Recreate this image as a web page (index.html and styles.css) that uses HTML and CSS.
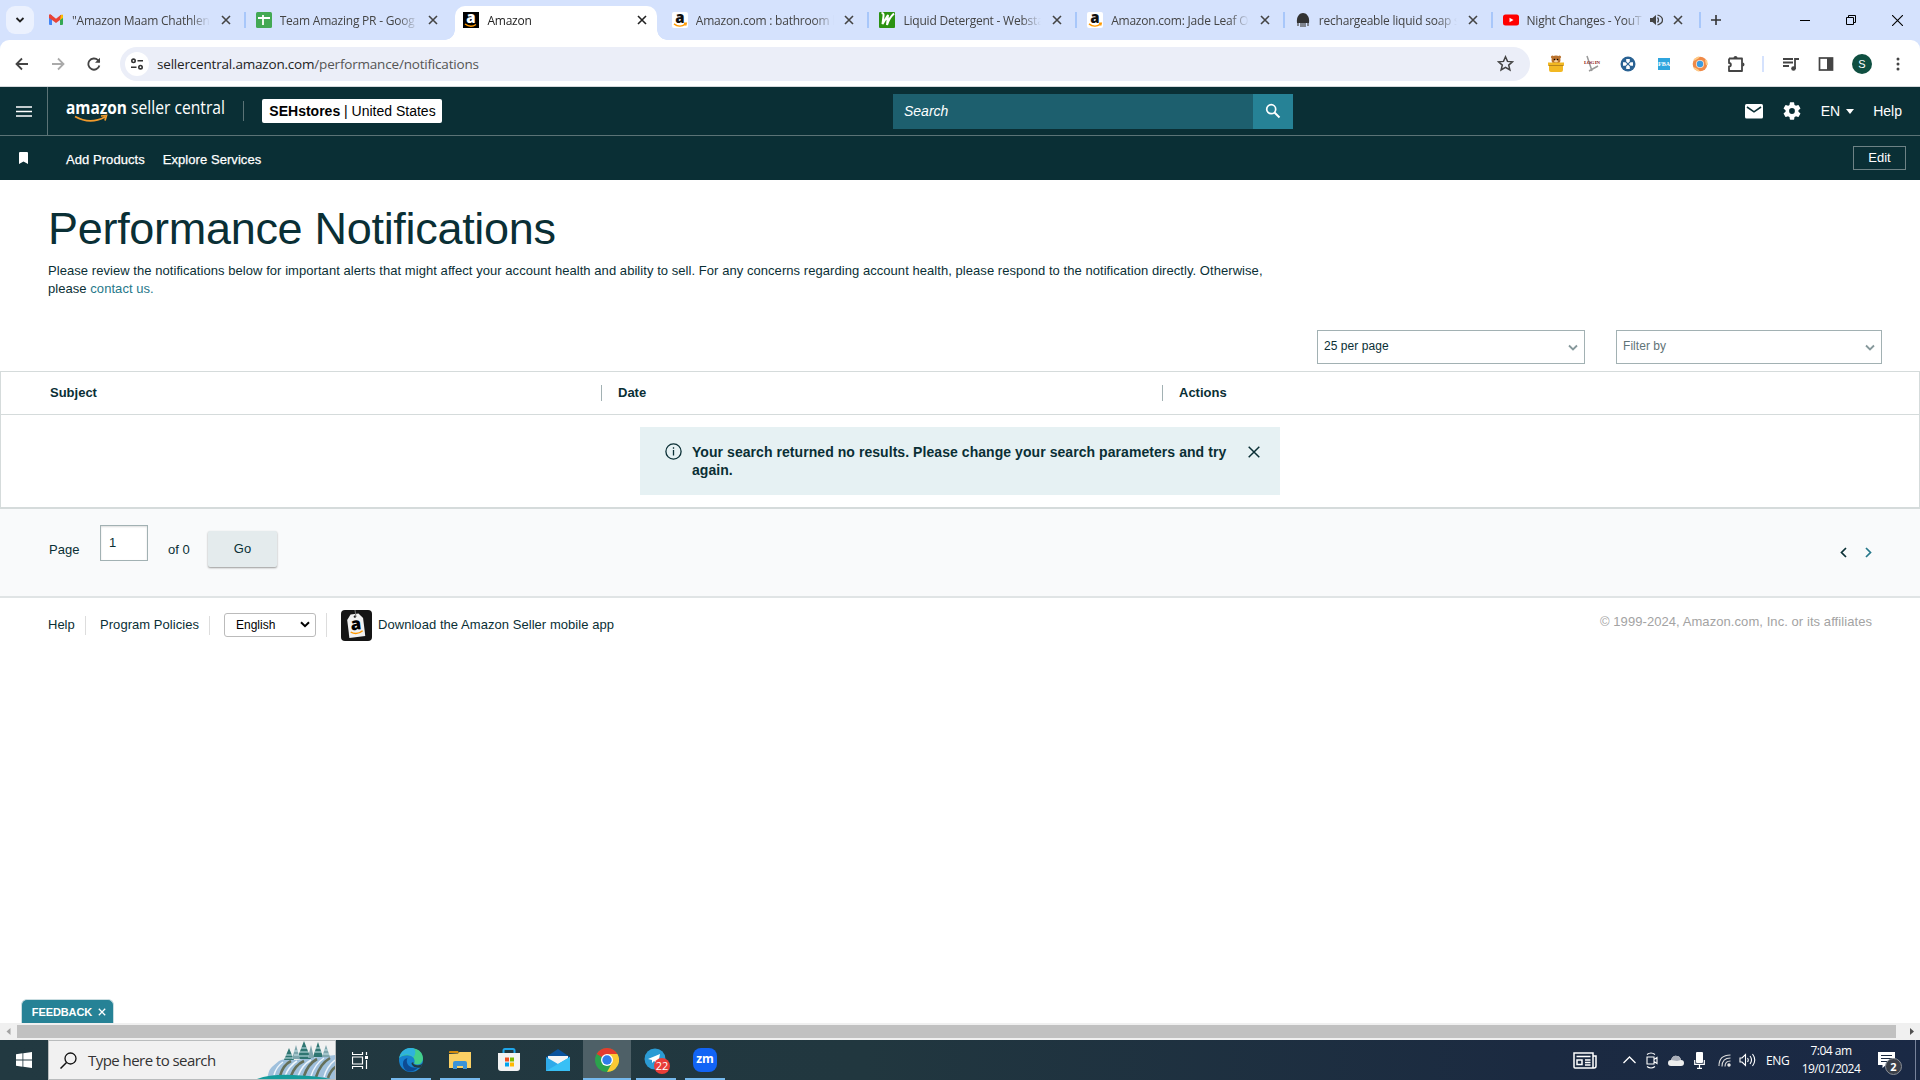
FILE: index.html
```html
<!DOCTYPE html>
<html lang="en">
  <head>
    <meta charset="UTF-8" />
    <meta name="viewport" content="width=device-width, initial-scale=1.0" />
    <title>Amazon</title>
    <link rel="stylesheet" href="styles.css">
  </head>
  <body>
    <!-- shared symbols -->
    <svg class="defs" aria-hidden="true">
      <symbol id="x" viewBox="0 0 10 10"><path d="M1 1l8 8M9 1L1 9" fill="none" stroke="currentColor" stroke-width="1.6" /></symbol>
      <symbol id="amz" viewBox="0 0 16 16">
        <rect width="16" height="16" rx="2" fill="#fff" />
        <text x="8" y="11" font-family="Open Sans" font-weight="800" font-size="15" text-anchor="middle" fill="#111">a</text>
        <path d="M2 11.8c3.500 2.800 8 2.800 11 .600M12 11.200l2.200.100-.600 2.200" fill="none" stroke="#f90" stroke-width="1.500" />
      </symbol>
    </svg>

    <div class="tabs">
      <div class="tab-search"><svg width="10" height="10" viewBox="0 0 10 10"><path d="M1.500 3L5 6.500 8.500 3" fill="none" stroke="#222" stroke-width="1.800" /></svg></div>
      <div class="tab">
        <svg class="fav" viewBox="0 0 16 16"><path d="M1 3h3v10H2a1 1 0 01-1-1z" fill="#4285f4" /><path d="M12 3h3v9a1 1 0 01-1 1h-2z" fill="#34a853" /><path d="M12 3.500l2-1a1 1 0 011 1V6l-3 2z" fill="#fbbc04" /><path d="M1 3.500C1 2.500 2.200 2 3 2.700l5 4 5-4L12 8l-4 3-4-3-3-2z" fill="#ea4335" /></svg>
        <span class="title">"Amazon Maam Chathlen</span>
        <svg class="x"><use href="#x" /></svg>
      </div>
      <div class="tab sep">
        <svg class="fav" viewBox="0 0 16 16"><rect width="16" height="16" rx="1.500" fill="#43a954" /><path d="M2 6h12M7 3v10" stroke="#fff" stroke-width="1.800" /></svg>
        <span class="title">Team Amazing PR - Goog</span>
        <svg class="x"><use href="#x" /></svg>
      </div>
      <div class="tab active">
        <svg class="fav" viewBox="0 0 16 16"><rect width="16" height="16" fill="#000" /><text x="8" y="11" font-family="Open Sans" font-weight="800" font-size="15" text-anchor="middle" fill="#fff">a</text><path d="M2 12c3.500 2.600 8 2.600 11 .500" fill="none" stroke="#f90" stroke-width="1.400" /></svg>
        <span class="title">Amazon</span>
        <svg class="x"><use href="#x" /></svg>
      </div>
      <div class="tab">
        <svg class="fav"><use href="#amz" /></svg>
        <span class="title">Amazon.com : bathroom h</span>
        <svg class="x"><use href="#x" /></svg>
      </div>
      <div class="tab sep">
        <svg class="fav" viewBox="0 0 16 16"><rect width="16" height="16" rx="1" fill="#2b9212" /><path d="M2.500 1q2.500 0 2 3l-1 8L9 3 8 13Q10 6 15 1.500" fill="none" stroke="#fff" stroke-width="2" /></svg>
        <span class="title">Liquid Detergent - Websta</span>
        <svg class="x"><use href="#x" /></svg>
      </div>
      <div class="tab sep">
        <svg class="fav"><use href="#amz" /></svg>
        <span class="title">Amazon.com: Jade Leaf O</span>
        <svg class="x"><use href="#x" /></svg>
      </div>
      <div class="tab sep">
        <svg class="fav" viewBox="0 0 16 16"><path d="M2 11C1 4 5 1 8 1s7 3 6 10z" fill="#333" /><path d="M3 11v3M6 11v4M8 11v4M10 11v4M13 11v3" stroke="#555" stroke-width="1.300" /></svg>
        <span class="title">rechargeable liquid soap s</span>
        <svg class="x"><use href="#x" /></svg>
      </div>
      <div class="tab sep last">
        <svg class="fav" viewBox="0 0 16 16"><rect y="2.500" width="16" height="11" rx="2.500" fill="#f00" /><path d="M6.500 5.700v4.600L10.500 8z" fill="#fff" /></svg>
        <span class="title short">Night Changes - YouT</span>
        <svg class="audio" viewBox="0 0 14 14"><path d="M1 5v4h2.500L7 12V2L3.500 5z" fill="#444" /><path d="M8.500 4.500q2 2.500 0 5M8.500 2q5 1.500 5 5t-5 5" fill="none" stroke="#444" stroke-width="1.300" /></svg>
        <svg class="x"><use href="#x" /></svg>
      </div>
      <div class="newtab"><svg width="12" height="12" viewBox="0 0 12 12"><path d="M6 1v10M1 6h10" stroke="#333" stroke-width="1.600" /></svg></div>
      <div class="winbtns">
        <svg width="10" height="10" viewBox="0 0 10 10"><path d="M0 5.500h10" stroke="#000" /></svg>
        <svg width="10" height="10" viewBox="0 0 10 10"><path d="M.500 2.500h7v7h-7zM2.500 2.500v-2h7v7h-2" fill="none" stroke="#000" /></svg>
        <svg width="11" height="11" viewBox="0 0 10 10"><path d="M0 0l10 10M10 0L0 10" stroke="#000" /></svg>
      </div>
    </div>

    <div class="toolbar">
      <div class="nav">
        <svg width="14" height="14" viewBox="0 0 14 14"><path d="M13 7H2M7 1.500L1.500 7 7 12.500" fill="none" stroke="#444" stroke-width="1.800" /></svg>
        <svg width="14" height="14" viewBox="0 0 14 14"><path d="M1 7h11M7 1.500L12.500 7 7 12.500" fill="none" stroke="#aaa" stroke-width="1.800" /></svg>
        <svg width="14" height="14" viewBox="0 0 14 14"><path d="M12.400 8.500A5.600 5.600 0 1111 3.200L12.500 5" fill="none" stroke="#444" stroke-width="1.800" /><path d="M13 .800v5H8z" fill="#444" /></svg>
      </div>
      <div class="omnibox">
        <span class="site-info"><svg width="14" height="14" viewBox="0 0 14 14" fill="none" stroke="#333" stroke-width="1.600"><circle cx="3.500" cy="3.800" r="1.700" /><path d="M7.500 3.800H13M1 10.200h5.500" /><circle cx="10.500" cy="10.200" r="1.700" /></svg></span>
        <span class="url">sellercentral.amazon.com<i>/performance/notifications</i></span>
        <svg class="star" width="17" height="17" viewBox="0 0 17 17"><path d="M8.500 1.800l2 4.600 5 .400-3.800 3.300 1.200 4.900-4.400-2.600L4.100 15l1.200-4.900L1.500 6.800l5-.400z" fill="none" stroke="#444" stroke-width="1.500" /></svg>
      </div>
      <div class="exts">
        <svg width="18" height="18" viewBox="0 0 18 18"><circle cx="9" cy="5" r="4.500" fill="#b9722e" /><circle cx="5.500" cy="2" r="1.600" fill="#b9722e" /><circle cx="12.500" cy="2" r="1.600" fill="#b9722e" /><circle cx="7.400" cy="4.500" r=".700" /><circle cx="10.600" cy="4.500" r=".700" /><ellipse cx="9" cy="6.300" rx="1.800" ry="1.200" fill="#f3cf9c" /><path d="M1 7.500h16v3h-1V15q0 2-2 2H4q-2 0-2-2v-4.500H1z" fill="#f2b822" /><path d="M1.500 10.500h15" stroke="#b9851b" /></svg>
        <svg width="18" height="18" viewBox="0 0 18 18"><path d="M4 1l5 15M15 11l-9 5" stroke="#999" stroke-width="1.500" /><text x="1" y="9" font-family="Liberation Serif" font-weight="700" font-size="5" textLength="16" fill="#8d2020">LOG IN</text></svg>
        <svg width="18" height="18" viewBox="0 0 18 18"><circle cx="9" cy="9" r="7.500" fill="#2a6293" /><path d="M7.200 4h3.600v2.500L9 8.200 7.200 6.500zM7.200 14h3.600v-2.500L9 9.800l-1.800 1.700zM4 7.200v3.600h2.500L8.200 9 6.500 7.200zM14 7.200v3.600h-2.500L9.800 9l1.700-1.800z" fill="#fff" /></svg>
        <svg width="18" height="18" viewBox="0 0 18 18"><rect x="3" y="3" width="12" height="12" fill="#2fa5de" /><text x="9" y="10.500" font-family="Liberation Serif" font-weight="700" font-size="6" text-anchor="middle" fill="#fff">FBA</text></svg>
        <svg width="18" height="18" viewBox="0 0 18 18"><circle cx="9" cy="9" r="7.300" fill="#f08a47" /><path d="M3 5l5-3M15 5l1 5M3 13l5 3" stroke="#ffcb87" stroke-width="2" /><circle cx="9" cy="9" r="4" fill="#fbe3cf" /><circle cx="9" cy="9" r="3.200" fill="#3c9be0" /></svg>
        <svg width="18" height="18" viewBox="0 0 18 18"><path d="M2 3.500h13V8M15 11v5H2v-4.500c2.500 0 2.500-3.500 0-3.500V3.500M15 11V8" fill="none" stroke="#444" stroke-width="1.800" stroke-linejoin="round" /><path d="M6.500 3a2 2 0 014 0zM15.500 7.500a2 2 0 010 4z" fill="#444" /></svg>
      </div>
      <span class="bar"></span>
      <div class="chrome-actions">
        <svg width="18" height="18" viewBox="0 0 18 18"><path d="M1 4h10M1 7.500h10M1 11h6M13 14V4h4" fill="none" stroke="#444" stroke-width="1.800" /><circle cx="11.500" cy="13.500" r="2.300" fill="#444" /></svg>
        <svg width="18" height="18" viewBox="0 0 18 18"><rect x="2.500" y="3" width="13" height="12" fill="none" stroke="#444" stroke-width="1.700" /><path d="M10 3h5.500v12H10z" fill="#444" /></svg>
        <span class="avatar">S</span>
        <svg width="18" height="18" viewBox="0 0 18 18" fill="#444"><circle cx="9" cy="4" r="1.500" /><circle cx="9" cy="9" r="1.500" /><circle cx="9" cy="14" r="1.500" /></svg>
      </div>
    </div>

    <header class="header">
      <div class="burger"><svg width="16" height="12" viewBox="0 0 16 12"><path d="M0 2h16M0 6.500h16M0 11h16" stroke="#fff" stroke-width="1.700" /></svg></div>
      <svg class="logo" width="160" height="28" viewBox="0 0 160 28" fill="#fff" font-family="Open Sans">
        <text x="0" y="17" font-size="18" font-weight="700" textLength="61" lengthAdjust="spacingAndGlyphs">amazon</text>
        <text x="65" y="17" font-size="18.500" textLength="94" lengthAdjust="spacingAndGlyphs">seller central</text>
        <path d="M9 19.500q15 8.500 30 .500M35 19l5.500-.500-1.500 5" fill="none" stroke="#f19a2c" stroke-width="1.700" />
      </svg>
      <span class="divider"></span>
      <button class="store"><b>SEHstores</b> | United States</button>
      <div class="search">
        <span>Search</span>
        <button><svg width="16" height="16" viewBox="0 0 16 16"><circle cx="6.200" cy="6.200" r="4.500" fill="none" stroke="#fff" stroke-width="1.700" /><path d="M9.500 9.500l5 5" stroke="#fff" stroke-width="2" /></svg></button>
      </div>
      <div class="header-right">
        <svg width="18" height="15" viewBox="0 0 18 15"><rect width="18" height="14.500" rx="1.500" fill="#fff" /><path d="M2 3l7 4.800L16 3" fill="none" stroke="#0a2f35" stroke-width="1.600" /></svg>
        <svg class="gear" width="18" height="18" viewBox="2 2 20 20"><path fill="#fff" d="M19.140 12.940c.04-.3.06-.61.06-.94s-.02-.64-.07-.94l2.030-1.580a.49.49 0 00.12-.61l-1.920-3.320a.49.49 0 00-.59-.22l-2.390.96a7 7 0 00-1.620-.94l-.36-2.540A.48.48 0 0013.920 2.400h-3.840a.48.48 0 00-.48.41l-.36 2.540c-.59.24-1.130.57-1.620.94l-2.390-.96a.49.49 0 00-.59.22L2.720 8.870a.48.48 0 00.12.61l2.030 1.580a6.500 6.500 0 000 1.880l-2.030 1.580a.49.49 0 00-.12.61l1.920 3.320c.12.220.37.290.59.220l2.390-.96c.5.380 1.030.7 1.620.94l.36 2.540c.5.240.24.410.48.410h3.840c.24 0 .44-.17.480-.41l.36-2.540c.59-.24 1.130-.56 1.620-.94l2.390.96c.22.080.47 0 .59-.22l1.920-3.320a.48.48 0 00-.12-.61zM12 15.200a3.200 3.200 0 110-6.400 3.200 3.200 0 010 6.400z" /></svg>
        <span class="lang">EN<i class="caret"></i></span>
        <span>Help</span>
      </div>
    </header>

    <nav class="subnav">
      <svg class="bookmark" width="9" height="12" viewBox="0 0 9 12"><path d="M0 1q0-1 1-1h7q1 0 1 1v11L4.500 9.500 0 12z" fill="#fff" /></svg>
      <a>Add Products</a>
      <a>Explore Services</a>
      <button>Edit</button>
    </nav>

    <main>
      <section class="intro">
        <h1>Performance Notifications</h1>
        <p>Please review the notifications below for important alerts that might affect your account health and ability to sell. For any concerns regarding account health, please respond to the notification directly. Otherwise,<br>please <a>contact us.</a></p>
      </section>

      <div class="filters">
        <div class="select">25 per page<svg width="10" height="8" viewBox="0 0 10 8"><path d="M1 1.500l4 4 4-4" /></svg></div>
        <div class="select muted">Filter by<svg width="10" height="8" viewBox="0 0 10 8"><path d="M1 1.500l4 4 4-4" /></svg></div>
      </div>

      <section class="table">
        <div class="thead">
          <span>Subject</span>
          <span>Date</span>
          <span>Actions</span>
        </div>
        <div class="alert">
          <svg class="info" width="17" height="17" viewBox="0 0 17 17"><circle cx="8.500" cy="8.500" r="7.600" fill="none" stroke="#0a2f35" stroke-width="1.300" /><path d="M8.500 7v5.500M8.500 4.200v1.500" stroke="#0a2f35" stroke-width="1.300" /></svg>
          <p>Your search returned no results. Please change your search parameters and try again.</p>
          <svg class="dismiss" width="12" height="12" viewBox="0 0 12 12"><path d="M.700.700l10.600 10.600M11.300.700L.700 11.300" stroke="#0a2f35" stroke-width="1.500" /></svg>
        </div>
      </section>

      <section class="pager">
        <span class="page-label">Page</span>
        <span class="page-input">1</span>
        <span class="page-total">of 0</span>
        <button>Go</button>
        <div class="arrows">
          <svg width="7" height="11" viewBox="0 0 7 11"><path d="M6 1L1.500 5.500 6 10" fill="none" stroke="#0a2f35" stroke-width="1.700" /></svg>
          <svg width="7" height="11" viewBox="0 0 7 11"><path d="M1 1l4.500 4.500L1 10" fill="none" stroke="#26788a" stroke-width="1.700" /></svg>
        </div>
      </section>

      <footer>
        <a class="help">Help</a>
        <a class="policies">Program Policies</a>
        <span class="language">English<svg width="10" height="7" viewBox="0 0 10 7"><path d="M1 1.200l4 4 4-4" fill="none" stroke="#000" stroke-width="2" /></svg></span>
        <span class="rule"></span>
        <svg class="app" width="31" height="31" viewBox="0 0 31 31"><rect width="31" height="31" rx="4" fill="#151515" /><g transform="rotate(-7 15 16)"><path d="M11 4h8l4 5v18H7V9z" fill="#f2f2f2" /><circle cx="15" cy="6.500" r="1.200" fill="#222" /><text x="15" y="20" font-family="Open Sans" font-size="17" font-weight="800" text-anchor="middle">a</text><path d="M9 21.500q6 4 12 0" fill="none" stroke="#f90" stroke-width="1.500" /></g><path d="M14 0l1 7" stroke="#777" /></svg>
        <a class="download">Download the Amazon Seller mobile app</a>
        <span class="copyright">© 1999-2024, Amazon.com, Inc. or its affiliates</span>
      </footer>
    </main>

    <div class="feedback">FEEDBACK<svg width="8" height="8" viewBox="0 0 10 10"><path d="M1 1l8 8M9 1L1 9" stroke="#fff" stroke-width="1.600" /></svg></div>
    <div class="scrollbar">
      <svg width="17" height="17" viewBox="0 0 17 17"><path d="M10.500 5v7L6.500 8.500z" fill="#a3a3a3" /></svg>
      <span class="thumb"></span>
      <svg width="24" height="17" viewBox="0 0 24 17"><path d="M14 5v7l4-3.500z" fill="#505050" /></svg>
    </div>

    <div class="taskbar">
      <div class="start"><svg width="16" height="16" viewBox="0 0 16 16" fill="#fff"><path d="M0 2.200l6.500-.900v6.200H0zM7.300 1.200L16 0v7.500H7.300zM0 8.400h6.500v6.300L0 13.800zM7.300 8.400H16V16l-8.700-1.200z" /></svg></div>
      <div class="task-search">
        <svg width="17" height="17" viewBox="0 0 17 17"><circle cx="10.500" cy="6.500" r="5.500" fill="none" stroke="#111" stroke-width="1.300" /><path d="M6.500 10.500L.500 16.500" stroke="#111" stroke-width="1.500" /></svg>
        <span>Type here to search</span>
        <svg class="art" width="78" height="38" viewBox="0 0 78 38">
          <path d="M11 34q1-6 5-9l6-5q5-3 10-1h8l10-2 12-1 16-2v24H10z" fill="#9fc0dc" />
          <path d="M34 20q-8 4-11 15M47 20q-9 4-13 15M60 18q-9 5-13 17M73 17q-10 6-14 19M80 25q-6 3-9 12" fill="none" stroke="#65705a" stroke-width="2.600" />
          <path d="M26 21q-7 5-9 13M40 20q-8 5-12 15M54 19q-9 5-13 16M67 17q-9 6-13 18M78 19q-8 6-11 17" fill="none" stroke="#edf5fc" stroke-width="1.500" />
          <g fill="#2f7672"><path d="M32 7l5 12H27zM47 0l7 18H40zM61 1l5 15H56z" /></g>
          <g fill="#7fa6ad"><path d="M39 4l4 14h-8zM54 4l3 13h-6zM69 4l4 12h-8z" /></g>
          <path d="M29 14h6M28 17h8M44 7h6M43 11h8M42 15h10M59 7h4M58 11h7M67 9h4M66 13h6M37 10h4M37 14h5" stroke="#c7e3ea" stroke-width="1.100" />
          <path d="M0 38q14-5 36-4 26 1 38 4z" fill="#139c9c" />
        </svg>
      </div>
      <div class="taskview"><svg width="16" height="17" viewBox="0 0 16 17"><path d="M.500 0v2.500h10V0M.500 17v-2.500h10V17M.500 5h10v7H.500zM14.500 0v3M14.500 8v9" fill="none" stroke="#fff" stroke-width="1.200" /><path d="M13 4h3v3h-3z" fill="#fff" /></svg></div>
      <div class="apps">
        <span class="app-btn open">
          <svg width="24" height="24" viewBox="0 0 24 24"><circle cx="12" cy="12" r="12" fill="#1681cf" /><path d="M.300 10C2 1 11-1 17 1c6 2 8 8 6.500 12-1.500 4-6 4-8.500 2.500 2-4-1-7.500-5-8C6 7 2 8 .300 10z" fill="#43cf8b" /><path d="M.300 10C2 1 10-1 14 .300c4 1 2 8 0 9C10 5 4 6 .300 10z" fill="#2fb2dd" /><path d="M8.500 10C6 15 10 21 19 19.500 14 26 5 24.500 4 17c-.500-4 1.500-6.500 4.500-7z" fill="#0d4b92" /><path d="M14.500 14c-1 2 1 3.200 5 3.200 2 0 3.500-1 4.500-2.200l-2.500 4.500c-5 1-9-1.500-9-4.500z" fill="#233a42" /></svg>
        </span>
        <span class="app-btn open">
          <svg width="22" height="20" viewBox="0 0 22 20"><path d="M0 2q0-1 1-1h8l1 2H0z" fill="#d58c0c" /><path d="M0 4l9-.500L10.500 2H22v16H0z" fill="#fbd064" /><path d="M4 19v-6q0-2 2-2h10q2 0 2 2v6h-4v-3H8v3z" fill="#3b93d8" /></svg>
        </span>
        <span class="app-btn">
          <svg width="24" height="24" viewBox="0 0 24 24"><path d="M6.500 6V2.500Q6.500 1 8 1h8q1.500 0 1.500 1.500V6" fill="none" stroke="#1fa6ea" stroke-width="2" /><path d="M1 5h22v15q0 3-3 3H4q-3 0-3-3z" fill="#f3f3f3" /><path d="M8 9.500h4v4H8z" fill="#f25022" /><path d="M13 9.500h4v4h-4z" fill="#7fba00" /><path d="M8 14.500h4v4H8z" fill="#00a4ef" /><path d="M13 14.500h4v4h-4z" fill="#ffb900" /></svg>
        </span>
        <span class="app-btn">
          <svg width="24" height="22" viewBox="0 0 24 22"><path d="M0 8l12-8 12 8v3H0z" fill="#0a529c" /><path d="M2 7h20v8H2z" fill="#f5f5f5" /><path d="M0 8l12 7 12-7v14H0z" fill="#2faae9" /><path d="M24 8v14L0 22z" fill="#38c0f5" /></svg>
        </span>
        <span class="app-btn open current">
          <svg width="24" height="24" viewBox="0 0 24 24"><circle cx="12" cy="12" r="12" fill="#2ba24c" /><path d="M12 12L1.600 6A12 12 0 0122.400 6z" fill="#e33b2e" /><path d="M22.400 6A12 12 0 0112 24l5-9-5-9z" fill="#fcc934" /><circle cx="12" cy="12" r="6" fill="#fff" /><circle cx="12" cy="12" r="4.700" fill="#2f7de9" /></svg>
        </span>
        <span class="app-btn open">
          <svg width="24" height="24" viewBox="0 0 24 24"><circle cx="11" cy="11" r="10.500" fill="#2b9bd4" /><path d="M4 11l12-5-2 10-4-3-2 2v-3z" fill="#fff" /></svg>
          <b class="badge">22</b>
        </span>
        <span class="app-btn open"><b class="zoom">zm</b></span>
      </div>
      <div class="tray">
        <svg class="news" width="24" height="17" viewBox="0 0 24 17" fill="none" stroke="#fff" stroke-width="1.500"><path d="M1 1h19v15H2q-1 0-1-1zM20 4h3v10q0 2-2 2h-2M3.500 4.500h14M12 8h5.500M12 10.500h5.500M12 13h5.500" /><path d="M4 8h5v4.500H4z" /></svg>
        <svg width="13" height="8" viewBox="0 0 13 8"><path d="M.500 7l6-6 6 6" fill="none" stroke="#fff" stroke-width="1.300" /></svg>
        <svg width="12" height="17" viewBox="0 0 12 17" fill="none" stroke="#fff" stroke-width="1.100"><path d="M1 5h7v7H1zM8 7.500l3-2v6l-3-2M1 2.500q4-3 8 0M1 14.500q4 3 8 0" /></svg>
        <svg width="16" height="11" viewBox="0 0 16 11"><path d="M3 11a3 3 0 010-6q2-5 6-4 3 0 4 4 3 0 3 3t-3 3z" fill="#eee" /><path d="M3 5q2-5 6-4 3 0 4 4l-4 1z" fill="#a9aeb9" /></svg>
        <svg width="11" height="17" viewBox="0 0 11 17"><rect x="2" width="7" height="11" rx="1" fill="#fff" /><path d="M.700 8v4.300h9.600V8M5.500 12v4M3 16.300h5" fill="none" stroke="#fff" stroke-width="1.200" /></svg>
        <svg class="wifi" width="13" height="13" viewBox="0 0 13 13" fill="none" stroke="#ddd" stroke-width="1.100"><path d="M1 12Q1 1 12.500 1M4 12.500Q4 4 12.500 4M7 12.500Q7 7 12.500 7" /><circle cx="11" cy="11" r="1.200" fill="#fff" /></svg>
        <svg width="17" height="14" viewBox="0 0 17 14" fill="none" stroke="#fff" stroke-width="1.100"><path d="M1 5v4h2l3.500 3.500v-11L3 5zM8.500 5q1.500 2 0 4M11 3q3 4 0 8M13.500 1q4.500 6 0 12" /></svg>
        <span class="ime">ENG</span>
        <span class="clock">7:04 am<br>19/01/2024</span>
        <span class="notif"><svg width="17" height="16" viewBox="0 0 17 16"><path d="M0 0h17v13H8l-3.500 3v-3H0z" fill="#fff" /><path d="M3 3.500h11M3 6.500h11M3 9.500h7" stroke="#1b2a41" stroke-width="1.100" /></svg><b>2</b></span>
      </div>
    </div>
  </body>
</html>
```
FILE: styles.css
```css
* {
  margin: 0;
  padding: 0;
  box-sizing: border-box;
}

body {
  width: 1920px;
  height: 1080px;
  overflow: hidden;
  display: flex;
  flex-direction: column;
  font-family: "Liberation Sans", Arial, sans-serif;
  font-size: 13px;
  color: #0a2f35;
  /* the blue shows behind the toolbar's rounded corners */
  background: linear-gradient(#d5e2fd 60px, #fff 60px);
}

svg {
  display: block;
  flex: none;
}

i {
  font-style: normal;
}

button {
  font-family: inherit;
}

.defs {
  display: none;
}

/* browser tabs */
.tabs {
  height: 40px;
  background: #d5e2fd;
  display: flex;
  align-items: center;
  flex: none;
  font-family: "Open Sans", sans-serif;
  font-size: 12px;
  color: #444;
}

.tab-search {
  width: 28px;
  height: 28px;
  margin: 0 6px;
  border-radius: 9px;
  background: #ebf1fe;
  display: flex;
  align-items: center;
  justify-content: center;
}

.tab {
  width: 207.7px;
  height: 34px;
  margin-top: 6px;
  padding: 0 17px 6px 8px;
  display: flex;
  align-items: center;
  flex: none;
  position: relative;
}

.tab.sep::before,
.tab.last::after {
  content: "";
  position: absolute;
  left: -4px;
  top: 6px;
  width: 2px;
  height: 16px;
  background: #a8c7fa;
}

.tab.last {
  width: 207px;
  padding-right: 19px;
}

.tab.last::after {
  left: auto;
  right: 1px;
}

.tab.active {
  width: 202px;
  margin-right: 6.4px;
  padding-right: 10.3px;
  background: #fff;
  border-radius: 10px 10px 0 0;
  color: #222;
}

.tab.active::before,
.tab.active::after {
  content: "";
  position: absolute;
  bottom: 0;
  width: 10px;
  height: 10px;
}

.tab.active::before {
  left: -10px;
  background: radial-gradient(circle at 0 0, transparent 9.5px, #fff 10px);
}

.tab.active::after {
  right: -10px;
  background: radial-gradient(circle at 100% 0, transparent 9.5px, #fff 10px);
}

.fav {
  width: 16px;
  height: 16px;
}

.title {
  width: 138px;
  margin-left: 8px;
  overflow: hidden;
  white-space: nowrap;
  letter-spacing: -0.22px;
  -webkit-mask-image: linear-gradient(90deg, #000 118px, transparent 138px);
}

.title.short {
  width: 115px;
  -webkit-mask-image: linear-gradient(90deg, #000 98px, transparent 117px);
}

.audio {
  width: 14px;
  height: 14px;
  margin-left: 7px;
}

.x {
  width: 10px;
  height: 10px;
  margin-left: auto;
}

.newtab {
  margin-left: 8px;
}

.winbtns {
  margin-left: auto;
  margin-right: 17px;
  display: flex;
  align-items: center;
  gap: 36px;
}

/* address bar */
.toolbar {
  height: 47px;
  flex: none;
  padding-left: 15px;
  padding-right: 13px;
  display: flex;
  align-items: center;
  background: linear-gradient(#fff 46px, #d5d9dc 46px);
  border-radius: 9px 9px 0 0;
}

.nav {
  display: flex;
  gap: 22px;
}

.omnibox {
  width: 1410px;
  height: 34px;
  margin-left: 19px;
  padding: 0 16px 0 5px;
  border-radius: 17px;
  background: #ebeef8;
  display: flex;
  align-items: center;
}

.site-info {
  width: 24px;
  height: 24px;
  border-radius: 50%;
  background: #fff;
  display: flex;
  align-items: center;
  justify-content: center;
}

.url {
  margin-left: 8px;
  font-family: "Open Sans", sans-serif;
  font-size: 13.5px;
  letter-spacing: -0.19px;
  color: #222;
}

.url i {
  color: #555;
}

.star {
  margin-left: auto;
}

.exts {
  display: flex;
  gap: 18px;
  margin-left: 17px;
}

.bar {
  width: 2px;
  height: 16px;
  margin: 0 18px 0 17px;
  background: #d5e2fd;
}

.chrome-actions {
  display: flex;
  align-items: center;
  gap: 17px;
}

.avatar {
  width: 20px;
  height: 20px;
  border-radius: 50%;
  background: #0f4f41;
  color: #fff;
  font-size: 11px;
  line-height: 20px;
  text-align: center;
}

/* seller central header */
.header {
  height: 49px;
  flex: none;
  background: #0a2f35;
  border-bottom: 1px solid #5b7376;
  display: flex;
  align-items: center;
  color: #fff;
  font-size: 14px;
}

.burger {
  width: 48px;
  height: 48px;
  border-right: 1px solid #5b7376;
  display: flex;
  align-items: center;
  justify-content: center;
}

.logo {
  margin-left: 18px;
}

.divider {
  width: 1px;
  height: 20px;
  margin-left: 17px;
  background: #5b7376;
}

.store {
  width: 180px;
  height: 24px;
  margin-left: 18px;
  padding-left: 1px;
  border: none;
  border-radius: 2px;
  background: #fff;
  color: #000;
  font-size: 14px;
  white-space: nowrap;
}

.search {
  width: 400px;
  height: 35px;
  margin-left: 451px;
  background: #1d5f6e;
  display: flex;
  align-items: center;
  justify-content: space-between;
  padding-left: 11px;
  font-style: italic;
}

.search button {
  width: 40px;
  height: 35px;
  border: none;
  background: #268296;
  display: flex;
  align-items: center;
  justify-content: center;
}

.header-right {
  margin-left: auto;
  margin-right: 18px;
  display: flex;
  align-items: center;
}

.gear {
  margin: 0 20px;
}

.lang {
  display: flex;
  align-items: center;
  margin-right: 19px;
}

.caret {
  margin-left: 6px;
  border: 4px solid transparent;
  border-top: 5px solid #fff;
  border-bottom: none;
}

.subnav {
  height: 44px;
  flex: none;
  background: #0a2f35;
  color: #fff;
  display: flex;
  align-items: center;
  padding-right: 14px;
}

.subnav a {
  margin-right: 18px;
  padding-top: 2px;
  letter-spacing: 0.06px;
  -webkit-text-stroke: 0.25px #fff;
}

.bookmark {
  margin: 0 38px 0 19px;
}

.subnav button {
  width: 53px;
  height: 24px;
  margin-left: auto;
  padding-bottom: 1px;
  border: 1px solid #6e8285;
  background: none;
  color: #fff;
  font-size: 13px;
}

/* page */
main {
  flex: 1;
  display: flex;
  flex-direction: column;
}

.intro {
  height: 150px;
  padding: 20px 48px 0;
}

h1 {
  font-size: 45px;
  font-weight: normal;
  line-height: 58px;
  letter-spacing: -0.3px;
}

.intro p {
  margin-top: 4px;
  line-height: 18px;
  font-size: 13px;
  letter-spacing: 0.055px;
  white-space: nowrap;
}

.intro a {
  color: #26788a;
}

.filters {
  height: 41px;
  display: flex;
  justify-content: flex-end;
  gap: 31px;
  padding-right: 38px;
}

.select {
  width: 268px;
  height: 34px;
  padding: 0 6px 2px;
  border: 1px solid #a2b1b3;
  display: flex;
  align-items: center;
  justify-content: space-between;
  font-size: 12px;
  letter-spacing: 0.05px;
}

.select.muted {
  width: 266px;
  color: #5f7477;
}

.select svg {
  margin-top: 4px;
  fill: none;
  stroke: #86989b;
  stroke-width: 1.8;
}

.table {
  height: 138px;
  border: 1px solid #d5dbdb;
  border-bottom: 2px solid #d5dbdb;
}

.thead {
  height: 43px;
  border-bottom: 1px solid #d5dbdb;
  display: grid;
  grid-template-columns: 600px 561px 1fr;
  align-items: center;
  font-weight: bold;
}

.thead span {
  height: 16px;
  line-height: 16px;
  padding-left: 16px;
  border-left: 1px solid #a2b1b3;
}

.thead span:first-child {
  padding-left: 49px;
  border: none;
}

.alert {
  width: 640px;
  height: 68px;
  margin: 12px auto 0;
  padding: 16px 20px 0 25px;
  background: #e6f1f3;
  display: flex;
  align-items: flex-start;
  font-size: 14px;
  font-weight: bold;
  line-height: 18px;
  letter-spacing: 0.06px;
}

.alert p {
  flex: 1;
  margin-left: 10px;
}

.dismiss {
  margin-top: 3px;
}

.pager {
  height: 89px;
  padding: 16px 48px 0;
  background: #f9fafb;
  border-bottom: 2px solid #e0e4e5;
  display: flex;
  align-items: flex-start;
}

.page-label,
.page-total {
  margin-top: 17px;
}

.page-label {
  width: 52px;
  padding-left: 1px;
}

.page-input {
  width: 48px;
  height: 36px;
  padding: 9px 8px;
  border: 1px solid #a2b1b3;
  background: #fff;
  box-shadow: inset 0 1px 2px #ddd;
}

.page-total {
  width: 60px;
  padding-left: 20px;
}

.pager button {
  width: 69px;
  height: 36px;
  margin-top: 6px;
  padding-bottom: 2px;
  border: none;
  border-radius: 2px;
  background: #e4ebed;
  box-shadow: 0 1px 2px #999;
  color: #0a2f35;
  font-size: 13px;
}

.arrows {
  margin-left: auto;
  margin-top: 22px;
  display: flex;
  gap: 18px;
}

footer {
  height: 54px;
  padding: 0 48px;
  display: flex;
  align-items: center;
}

.help {
  width: 38px;
  border-right: 1px solid #ddd;
  line-height: 17px;
  padding-bottom: 2px;
}

.policies {
  width: 124px;
  padding-left: 14px;
  padding-bottom: 2px;
  border-right: 1px solid #ddd;
  line-height: 17px;
  letter-spacing: 0.05px;
  white-space: nowrap;
}

.language {
  width: 92px;
  height: 24px;
  margin-left: 14px;
  margin-bottom: 1px;
  padding: 0 5px 0 11px;
  border: 1px solid #bbb;
  border-radius: 3px;
  display: flex;
  align-items: center;
  justify-content: space-between;
  font-size: 12px;
  color: #000;
}

.rule {
  width: 1px;
  height: 24px;
  margin: 0 14px 0 10px;
  background: #ddd;
}

.download {
  margin-left: 6px;
  padding-bottom: 2px;
  letter-spacing: 0.05px;
}

.copyright {
  margin-left: auto;
  margin-bottom: 8px;
  color: #a3a3a3;
  letter-spacing: 0.07px;
}

.feedback {
  width: 93px;
  height: 24px;
  margin-left: 20.5px;
  padding-left: 4px;
  flex: none;
  border: 1px solid #c9dde1;
  border-bottom: none;
  border-radius: 6px 6px 0 0;
  background: #268296;
  color: #fff;
  font-size: 11px;
  font-weight: bold;
  display: flex;
  align-items: center;
  justify-content: center;
  gap: 6px;
  letter-spacing: -0.1px;
}

.scrollbar {
  height: 17px;
  flex: none;
  background: #f0f0f0;
  display: flex;
  align-items: center;
}

.thumb {
  flex: 1;
  height: 13px;
  background: #c1c1c1;
}

/* windows taskbar */
.taskbar {
  height: 40px;
  flex: none;
  background: linear-gradient(90deg, #223941 0, #21373f 45%, #1b2a41 80%, #1a2945 100%);
  display: flex;
  align-items: center;
  font-family: "Open Sans", sans-serif;
  color: #fff;
}

.start {
  width: 48px;
  display: flex;
  justify-content: center;
}

.task-search {
  width: 288px;
  height: 40px;
  padding-left: 11px;
  border: 1px solid #b9bcbd;
  background: #f1f1f1;
  color: #333;
  font-size: 15px;
  letter-spacing: -0.55px;
  display: flex;
  align-items: center;
  overflow: hidden;
}

.task-search span {
  margin-left: 11px;
  white-space: nowrap;
}

.art {
  margin-left: auto;
}

.taskview {
  width: 47px;
  display: flex;
  justify-content: center;
}

.apps {
  display: flex;
  margin-left: 4px;
  gap: 1px;
}

.app-btn {
  width: 48px;
  height: 40px;
  display: flex;
  align-items: center;
  justify-content: center;
  position: relative;
}

.app-btn.open::after {
  content: "";
  position: absolute;
  left: 4px;
  right: 4px;
  bottom: 0;
  height: 2px;
  background: #76b9ed;
}

.app-btn.current {
  background: #4e6067;
}

.app-btn.current::after {
  left: 0;
  right: 0;
}

.badge {
  position: absolute;
  left: 22px;
  top: 18px;
  width: 16px;
  height: 16px;
  border-radius: 50%;
  background: #e93d38;
  font-size: 11px;
  font-weight: normal;
  line-height: 16px;
  text-align: center;
}

.zoom {
  width: 24px;
  height: 24px;
  border-radius: 8px;
  background: #1264f5;
  font-size: 12px;
  line-height: 21px;
  text-align: center;
}

.tray {
  height: 40px;
  margin-left: auto;
  margin-right: 4px;
  padding-right: 13px;
  border-right: 1px solid #77829a;
  display: flex;
  align-items: center;
  gap: 10px;
}

.news {
  margin-right: 16px;
}

.wifi {
  margin-left: 3px;
  margin-right: -2px;
}

.ime {
  width: 24px;
  font-size: 12px;
  letter-spacing: -0.3px;
}

.clock {
  width: 60px;
  margin-left: 1px;
  font-size: 12px;
  line-height: 18px;
  letter-spacing: -0.5px;
  text-align: center;
}

.notif {
  width: 24px;
  height: 24px;
  margin-left: 7px;
  padding-top: 4px;
  position: relative;
}

.notif b {
  position: absolute;
  left: 7px;
  top: 10px;
  width: 17px;
  height: 17px;
  border-radius: 50%;
  background: #3a3f48;
  border: 1px solid #8a8f98;
  font-size: 11px;
  line-height: 15px;
  text-align: center;
}
```
